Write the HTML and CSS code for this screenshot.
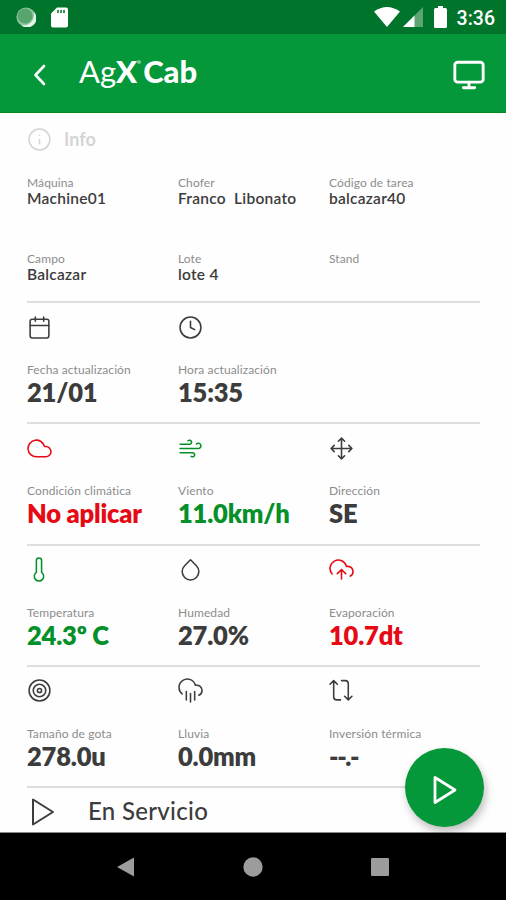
FILE: index.html
```html
<!DOCTYPE html>
<html lang="es">
<head>
    <meta charset="UTF-8">
    <meta name="viewport" content="width=device-width, initial-scale=1.0">
    <title>AgX Cab</title>
    <link rel="stylesheet" href="styles.css">
</head>
<body>
    <div class="status-bar">
        <div class="status-left">
            <svg width="20" height="20" viewBox="0 0 20 20"><circle cx="10" cy="10" r="9.6" fill="#8cc49d"/><path d="M17.5 4.500A9 9 0 0 1 5 18A10.500 10.500 0 0 0 17.500 4.500z" fill="#e6f5ea"/><circle cx="9" cy="9" r="7.500" fill="#58a66f"/></svg>
            <svg width="17" height="21" viewBox="0 0 17 21"><path d="M6 .5h9a2 2 0 0 1 2 2v16a2 2 0 0 1-2 2H2a2 2 0 0 1-2-2v-12z" fill="#fff"/><path d="M7 3.500v2M10 3.500v2M13 3.500v2" stroke="#00742a" stroke-width="1.6"/></svg>
        </div>
        <div class="status-right">
            <svg class="wifi" width="26" height="20" viewBox="0 0 26 20"><path d="M0 4.500Q13-4.500 26 4.500L13 20z" fill="#fff"/></svg>
            <svg class="signal" width="20" height="20" viewBox="0 0 20 20"><path d="M20 0v20H0z" fill="#5ba573"/><path d="M11.500 8.500V20H0z" fill="#fff"/></svg>
            <svg class="battery" width="13" height="22" viewBox="0 0 13 22"><path d="M4 0h5v2h2.500A1.500 1.500 0 0 1 13 3.500v17a1.500 1.500 0 0 1-1.500 1.500h-10A1.500 1.500 0 0 1 0 20.500v-17A1.500 1.500 0 0 1 1.500 2H4z" fill="#fff"/></svg>
            <span class="clock">3:36</span>
        </div>
    </div>

    <header class="header">
        <svg class="back" width="14" height="22" viewBox="0 0 14 22"><path d="M11 2L2.500 11l8.500 9"/></svg>
        <div class="logo">Ag<b>X</b><span class="dot"></span><b>Cab</b></div>
        <svg class="monitor" width="34" height="34" viewBox="0 0 24 24"><rect x="2" y="3" width="20" height="14" rx="2"/><path d="M8 21h8M12 17v4"/></svg>
    </header>

    <main class="content">
        <div class="info-title">
            <svg class="icon" viewBox="0 0 24 24"><circle cx="12" cy="12" r="10"/><path d="M12 16v-4M12 8h.01"/></svg>
            <span>Info</span>
        </div>

        <div class="row details">
            <div><p class="label">Máquina</p><p class="text">Machine01</p></div>
            <div><p class="label">Chofer</p><p class="text">Franco&nbsp; Libonato</p></div>
            <div><p class="label">Código de tarea</p><p class="text">balcazar40</p></div>
        </div>
        <div class="row details">
            <div><p class="label">Campo</p><p class="text">Balcazar</p></div>
            <div><p class="label">Lote</p><p class="text">lote 4</p></div>
            <div><p class="label">Stand</p></div>
        </div>

        <section class="row data">
            <div>
                <svg class="icon" viewBox="0 0 24 24"><rect x="3" y="4" width="18" height="18" rx="2"/><path d="M16 2v4M8 2v4M3 10h18"/></svg>
                <p class="label">Fecha actualización</p>
                <p class="value">21/01</p>
            </div>
            <div>
                <svg class="icon" viewBox="0 0 24 24"><circle cx="12" cy="12" r="10"/><path d="M12 6v6l4 2"/></svg>
                <p class="label">Hora actualización</p>
                <p class="value">15:35</p>
            </div>
        </section>

        <section class="row data">
            <div class="red">
                <svg class="icon" viewBox="0 0 24 24"><path d="M18 10h-1.260A8 8 0 1 0 9 20h9a5 5 0 0 0 0-10z"/></svg>
                <p class="label">Condición climática</p>
                <p class="value">No aplicar</p>
            </div>
            <div class="green">
                <svg class="icon" viewBox="0 0 24 24"><path d="M9.590 4.590A2 2 0 1 1 11 8H2m10.590 11.410A2 2 0 1 0 14 16H2m15.730-8.270A2.500 2.500 0 1 1 19.500 12H2"/></svg>
                <p class="label">Viento</p>
                <p class="value">11.0km/h</p>
            </div>
            <div>
                <svg class="icon" viewBox="0 0 24 24"><path d="M5 9l-3 3 3 3M9 5l3-3 3 3M15 19l-3 3-3-3M19 9l3 3-3 3M2 12h20M12 2v20"/></svg>
                <p class="label">Dirección</p>
                <p class="value">SE</p>
            </div>
        </section>

        <section class="row data">
            <div class="green">
                <svg class="icon" viewBox="0 0 24 24"><path d="M14 14.760V3.500a2.500 2.500 0 0 0-5 0v11.260a4.500 4.500 0 1 0 5 0z"/></svg>
                <p class="label">Temperatura</p>
                <p class="value">24.3º C</p>
            </div>
            <div>
                <svg class="icon" viewBox="0 0 24 24"><path d="M12 2.690l5.660 5.660a8 8 0 1 1-11.310 0z"/></svg>
                <p class="label">Humedad</p>
                <p class="value">27.0%</p>
            </div>
            <div class="red">
                <svg class="icon" viewBox="0 0 24 24"><path d="M16 16l-4-4-4 4M12 12v9M20.390 18.390A5 5 0 0 0 18 9h-1.260A8 8 0 1 0 3 16.300"/></svg>
                <p class="label">Evaporación</p>
                <p class="value">10.7dt</p>
            </div>
        </section>

        <section class="row data">
            <div>
                <svg class="icon" viewBox="0 0 24 24"><circle cx="12" cy="12" r="10"/><circle cx="12" cy="12" r="6"/><circle cx="12" cy="12" r="2"/></svg>
                <p class="label">Tamaño de gota</p>
                <p class="value">278.0u</p>
            </div>
            <div>
                <svg class="icon" viewBox="0 0 24 24"><path d="M16 13v8M8 13v8M12 15v8M20 16.580A5 5 0 0 0 18 7h-1.260A8 8 0 1 0 4 15.250"/></svg>
                <p class="label">Lluvia</p>
                <p class="value">0.0mm</p>
            </div>
            <div>
                <svg class="icon" viewBox="0 0 24 24"><path d="M1 6l3.500-3.500L8 6M4.500 2.500V18a3 3 0 0 0 3 3H11M12 2.500h3.500a3 3 0 0 1 3 3V21M15 17.500l3.500 3.500 3.500-3.500"/></svg>
                <p class="label">Inversión térmica</p>
                <p class="value empty">--.-</p>
            </div>
        </section>

        <div class="service">
            <svg width="26" height="30" viewBox="0 0 26 30"><path d="M3 2.500v25L23 15z"/></svg>
            <span>En Servicio</span>
        </div>
    </main>

    <button class="fab" aria-label="Iniciar">
        <svg width="26" height="30" viewBox="0 0 26 30"><path d="M3 2.500v25L23 15z"/></svg>
    </button>

    <nav class="nav-bar">
        <svg width="20" height="20" viewBox="0 0 20 20"><path d="M18 .5v19L1 10z"/></svg>
        <svg width="20" height="20" viewBox="0 0 20 20"><circle cx="10" cy="10" r="9.700"/></svg>
        <svg width="20" height="20" viewBox="0 0 20 20"><rect x="1" y="1" width="18" height="18" rx="1"/></svg>
    </nav>
</body>
</html>
```
FILE: styles.css
```css
* {
    box-sizing: border-box;
}
body {
    margin: 0;
    height: 900px;
    display: flex;
    flex-direction: column;
    font-family: Lato, sans-serif;
    color: #3c3c3c;
    background: #fefefe;
    overflow: hidden;
}
p {
    margin: 0;
}
svg {
    display: block;
    fill: none;
    stroke-linecap: round;
    stroke-linejoin: round;
}
.status-bar {
    height: 34px;
    flex: none;
    display: flex;
    justify-content: space-between;
    padding: 0 11px 0 16px;
    background: #00742a;
}
.status-left, .status-right {
    display: flex;
    align-items: center;
}
.status-left {
    gap: 15px;
}
.wifi {
    margin-right: 3px;
}
.signal {
    margin-right: 11px;
}
.battery {
    margin-right: 10px;
}
.clock {
    margin-top: 2px;
    font: 500 19.5px Roboto, sans-serif;
    color: #fff;
}
.header {
    height: 79px;
    flex: none;
    display: flex;
    align-items: center;
    padding: 0 20px 0 33px;
    background: #05983a;
    border-bottom: 1px solid #058a20;
    color: #fff;
}
.header svg {
    stroke: #fff;
    stroke-width: 2;
}
.header .back {
    margin-top: 3px;
    stroke-width: 2.6;
}
.header .monitor {
    margin-top: 3px;
}
.logo {
    display: flex;
    margin: -4px auto 0 32px;
    font-size: 31px;
    line-height: 36px;
}
.logo b {
    font-weight: 900;
}
.dot {
    width: 4px;
    height: 4px;
    margin: 7px 2px 0 0;
    border-radius: 50%;
    background: #7dc896;
}
.content {
    height: 720px;
    flex: none;
    padding: 0 26px 0 27px;
    border-bottom: 1px solid #888;
}
.icon {
    width: 25px;
    height: 25px;
    stroke: currentColor;
    stroke-width: 1.5;
}
.info-title {
    display: flex;
    align-items: center;
    gap: 12px;
    height: 52px;
    font-size: 18px;
    font-weight: 700;
    color: #d5d5d5;
}
.row {
    display: grid;
    grid-template-columns: repeat(3, 151px);
}
.details {
    height: 76px;
    padding-top: 10px;
}
.label {
    font-size: 12px;
    line-height: 15px;
    letter-spacing: 0.1px;
    color: #8c8c8c;
    white-space: nowrap;
}
.text {
    font-size: 15.5px;
    line-height: 17px;
    font-weight: 600;
    letter-spacing: 0.25px;
    white-space: nowrap;
}
.details + .data {
    margin-top: -16px;
}
.data {
    height: 121.25px;
    padding-top: 11.5px;
    border-top: 2px solid #dedede;
}
.data .label {
    margin-top: 22.5px;
}
.value {
    font-size: 25.5px;
    line-height: 30px;
    font-weight: 800;
    letter-spacing: -0.2px;
    white-space: nowrap;
}
.empty {
    letter-spacing: -1.4px;
}
.red .icon, .red .value {
    color: #e60a14;
}
.green .icon, .green .value {
    color: #05902a;
}
.service {
    display: flex;
    align-items: center;
    gap: 32px;
    height: 50px;
    padding-left: 3px;
    border-top: 2px solid #dedede;
    font-size: 24px;
    font-weight: 500;
    letter-spacing: 0.3px;
}
.service span {
    margin-top: -4px;
}
.service svg {
    stroke: #3c3c3c;
    stroke-width: 2;
}
.fab {
    position: absolute;
    left: 405px;
    top: 748px;
    width: 79px;
    height: 79px;
    display: flex;
    align-items: center;
    justify-content: center;
    padding: 4px 0 0;
    border: none;
    border-radius: 50%;
    background: #05983a;
    box-shadow: 2px 5px 8px rgba(0,0,0,0.25);
}
.fab svg {
    stroke: #fff;
    stroke-width: 2.8;
}
.nav-bar {
    flex: 1;
    display: flex;
    justify-content: center;
    align-items: center;
    gap: 107px;
    background: #000;
}
.nav-bar svg {
    fill: #9c9c9c;
}
```
